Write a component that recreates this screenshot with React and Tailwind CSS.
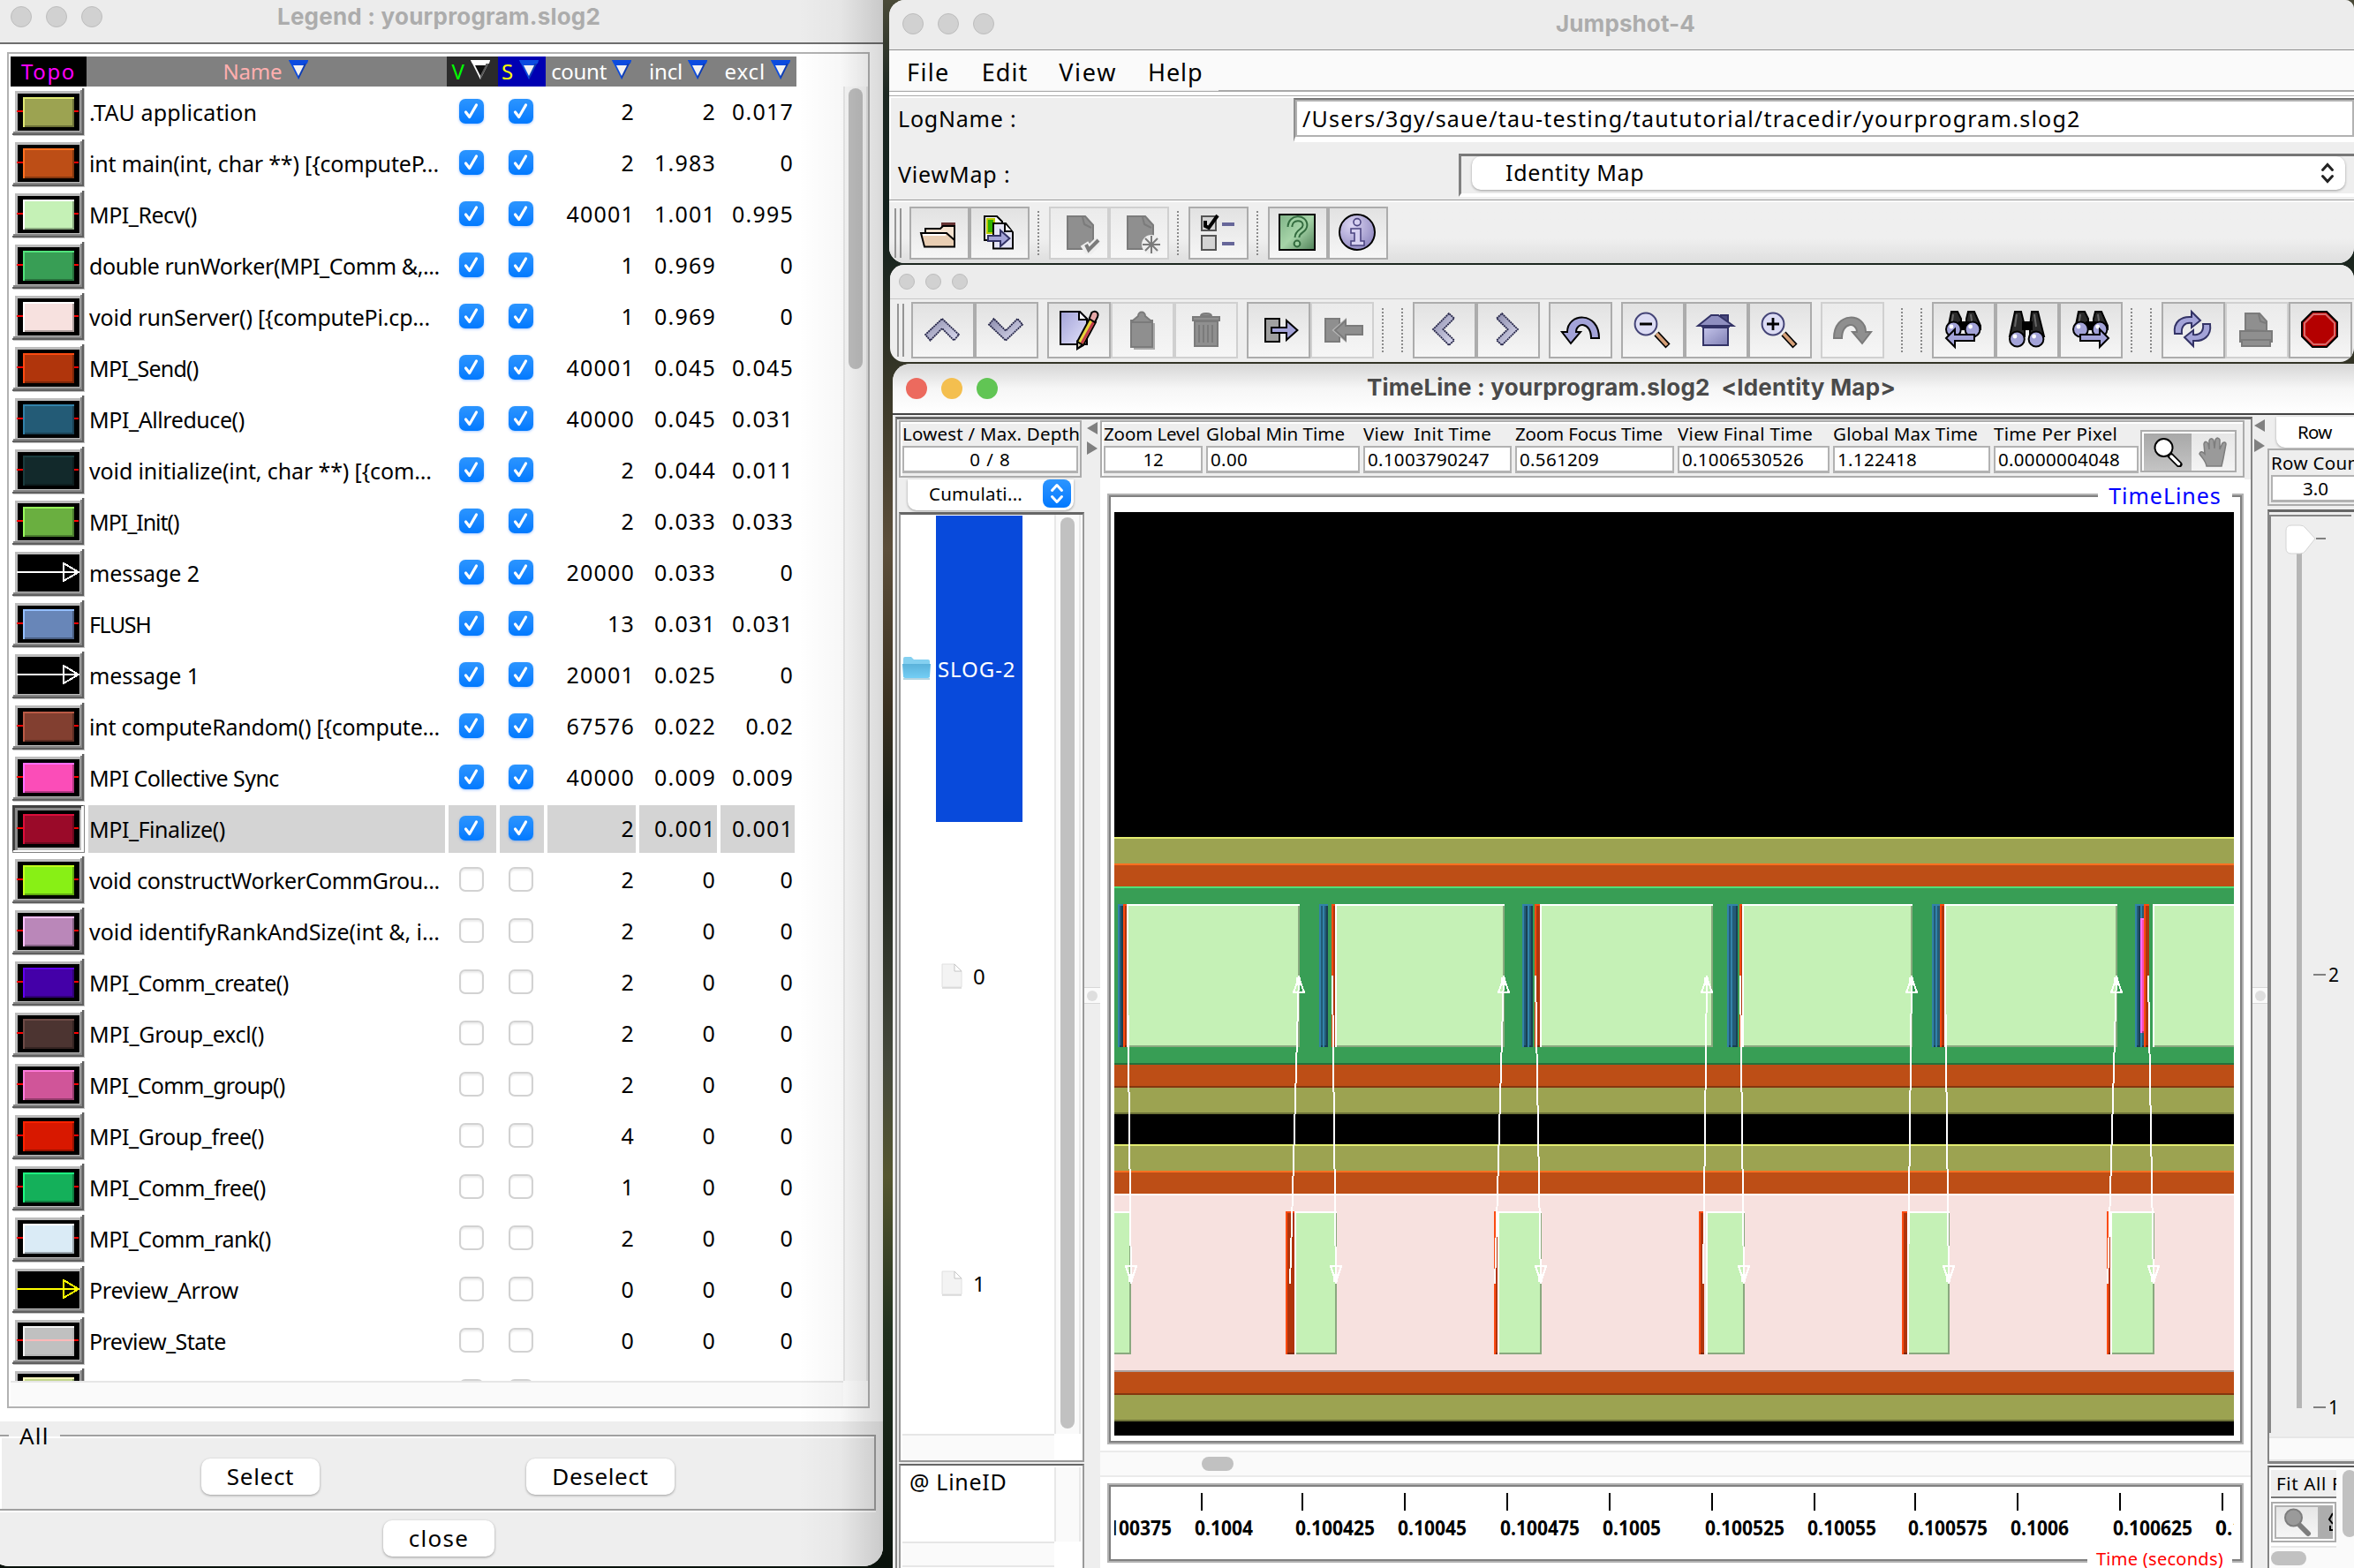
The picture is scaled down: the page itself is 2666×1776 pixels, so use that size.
import React, { useLayoutEffect, useRef, useState } from 'react';

/* Text whose letter spacing is computed so that it fills the width `w`. */
function Fit({ w, children, className = '' }) {
  const ref = useRef(null);
  const [spacing, setSpacing] = useState(0);
  useLayoutEffect(() => {
    const natural = ref.current.getBoundingClientRect().width;
    setSpacing((w - natural) / Math.max(1, String(children).length - 0.5));
  }, [w, children]);
  return (
    <span ref={ref} className={`inline-block shrink-0 whitespace-pre leading-none ${className}`} style={{ letterSpacing: `${spacing}px` }}>
      {children}
    </span>
  );
}

/* ---------- Legend window ---------- */

const rows = [
  ['.TAU application', 190, '#9ca351', '#dfe973', '#6d7238', '2', '2', '0.017'],
  ['int main(int, char **) [{computeP...', 396, '#bd4e16', '#ff7020', '#84370f', '2', '1.983', '0'],
  ['MPI_Recv()', 122, '#c5f1b6', '#ffffff', '#8aa97f', '40001', '1.001', '0.995'],
  ['double runWorker(MPI_Comm &,...', 397, '#389e55', '#50e27a', '#276f3b', '1', '0.969', '0'],
  ['void runServer() [{computePi.cp...', 386, '#f7e1df', '#ffffff', '#ad9e9c', '1', '0.969', '0'],
  ['MPI_Send()', 124, '#b0350c', '#fb4b11', '#7b2508', '40001', '0.045', '0.045'],
  ['MPI_Allreduce()', 176, '#235b76', '#3282a9', '#194053', '40000', '0.045', '0.031'],
  ['void initialize(int, char **) [{com...', 388, '#12292b', '#1a3b3d', '#0d1d1e', '2', '0.044', '0.011'],
  ['MPI_Init()', 102, '#6aaf40', '#97fa5b', '#4a7b2d', '2', '0.033', '0.033'],
  ['message 2', 125, 'arrow', '#ffffff', '', '20000', '0.033', '0'],
  ['FLUSH', 70, '#6886b8', '#94bfff', '#495e81', '13', '0.031', '0.031'],
  ['message 1', 125, 'arrow', '#ffffff', '', '20001', '0.025', '0'],
  ['int computeRandom() [{compute...', 397, '#823f30', '#ba5a45', '#5b2c22', '67576', '0.022', '0.02'],
  ['MPI Collective Sync', 215, '#fb4db8', '#ff6eff', '#b03681', '40000', '0.009', '0.009'],
  ['MPI_Finalize()', 154, '#9a0a29', '#dc0e3b', '#6c071d', '2', '0.001', '0.001'],
  ['void constructWorkerCommGrou...', 397, '#88f015', '#c2ff1e', '#5fa80f', '2', '0', '0'],
  ['void identifyRankAndSize(int &, i...', 397, '#ba87b9', '#ffc1ff', '#825f82', '2', '0', '0'],
  ['MPI_Comm_create()', 226, '#4400a8', '#6100f0', '#300076', '2', '0', '0'],
  ['MPI_Group_excl()', 198, '#4c3431', '#6d4a46', '#352422', '2', '0', '0'],
  ['MPI_Comm_group()', 222, '#d05599', '#ff7adb', '#923b6b', '2', '0', '0'],
  ['MPI_Group_free()', 198, '#d81800', '#ff2200', '#971100', '4', '0', '0'],
  ['MPI_Comm_free()', 200, '#14b05a', '#1dfb81', '#0e7b3f', '1', '0', '0'],
  ['MPI_Comm_rank()', 206, '#daebf6', '#ffffff', '#99a5ac', '2', '0', '0'],
  ['Preview_Arrow', 169, 'arrow', '#ffff00', '', '0', '0', '0'],
  ['Preview_State', 155, '#c0c0c0', '#f4f4f4', '#b4b4b4', '0', '0', '0'],
  ['', 0, '#c3d68c', '#fff9c0', '#88a060', '', '', ''],
];

function Swatch({ fill, light, dark, sunken, preview }) {
  return (
    <svg width="82" height="54" viewBox="0 0 82 54" shapeRendering="crispEdges" className="shrink-0">
      {sunken ? (
        <>
          <rect width="82" height="54" fill="#808080" />
          <rect x="0" y="0" width="80" height="3" fill="#404040" />
          <rect x="0" y="0" width="3" height="52" fill="#404040" />
          <rect x="3" y="3" width="75" height="48" fill="#8a8a8a" />
          <path d="M76 5h2v46H6v-3h70z" fill="#bcbcbc" />
          <path d="M78 1h3v52H1v-2h77z" fill="#fff" />
        </>
      ) : (
        <>
          <rect x="3" y="3" width="76" height="48" fill="#bcbcbc" />
          <path d="M77 2h3v48H0v-0h77z" fill="#868686" />
          <path d="M1 49h78v3H1z" fill="#868686" />
          <path d="M79 0h2v53H0v-2h79z" fill="#5f5f5f" />
          <path d="M81 0h1v54H1v-1h80z" fill="#c4c4c4" />
        </>
      )}
      <rect x="6" y="6" width="70" height="42" fill="#000" />
      {fill === 'arrow' ? (
        <>
          <path d="M5 26h71" stroke={light} strokeWidth="2" />
          <path d="M58 16v20l17-10z" fill="none" stroke={light} strokeWidth="2" />
        </>
      ) : (
        <>
          <path d="M5 26h7M70 26h5" stroke="#f00" strokeWidth="2" />
          <rect x="12" y="10" width="58" height="34" fill={fill} />
          <path d="M12 42h56v-32h2v34h-58z" fill={dark} />
          <path d="M12 10h58v2h-56v32h-2z" fill={light} />
          {preview && <path d="M14 26h56" stroke="#ffb8b8" strokeWidth="2" />}
        </>
      )}
    </svg>
  );
}

function Check({ on }) {
  return on ? (
    <span className="flex size-7 items-center justify-center rounded-[7px] bg-linear-to-b from-[#2b95ff] to-[#0079ff] shadow-[0_1px_3px_rgba(0,100,255,0.35)]">
      <svg width="20" height="20" viewBox="0 0 20 20" fill="none" stroke="#fff" strokeWidth="3.2" strokeLinecap="round" strokeLinejoin="round">
        <path d="M3.5 11l4.2 5.5L15.5 3" />
      </svg>
    </span>
  ) : (
    <span className="size-7 rounded-[7px] border-2 border-[#d2d2d2] bg-white shadow-[inset_0_2px_2px_rgba(0,0,0,0.08)]" />
  );
}

function SortMark({ face = '#f2f2f2', left = '#0b4be0', right = '#0f3cae', top = '#0b4be0' }) {
  return (
    <svg width="22" height="22" viewBox="0 0 22 22" className="-mt-1 shrink-0">
      <path d="M0 0h22l-11 22z" fill={left} />
      <path d="M22 0l-11 22v-4l7-15z" fill={right} />
      <path d="M0 0h22l-1 4H2z" fill={top} />
      <path d="M5 6h12l-6 12z" fill={face} />
    </svg>
  );
}

const COLS = 'grid grid-cols-[86px_408px_58px_54px_104px_92px_88px]';

function Dots({ size, gap }) {
  return (
    <div className={`flex ${gap}`}>
      {[0, 1, 2].map((i) => (
        <span key={i} className={`${size} rounded-full border border-[#bdbdbd] bg-[#d1d1d1]`} />
      ))}
    </div>
  );
}

function PushButton({ w, children, className }) {
  return (
    <button className={`flex items-center justify-center rounded-[10px] bg-white pb-0.5 text-[26px] shadow-[0_1px_3px_rgba(0,0,0,0.35)] ${className}`}>
      <Fit w={w}>{children}</Fit>
    </button>
  );
}

function LegendWindow() {
  return (
    <section className="absolute -left-3 top-[-20px] flex h-[1794px] w-[1012px] flex-col overflow-hidden rounded-[22px] bg-white pl-3 pt-5">
      <header className="flex h-12 shrink-0 items-center bg-[#ececec] pb-2.5 pl-3">
        <Dots size="size-6" gap="gap-4" />
        <Fit w={366} className="ml-[198px] font-['Inter'] text-[26px] font-bold text-[#acacac]">Legend : yourprogram.slog2</Fit>
      </header>
      <div className="h-0.5 shrink-0 bg-[#6e6e6e]" />
      <div className="ml-2 mt-[9px] flex h-[1536px] w-[977px] shrink-0 flex-col border-2 border-[#b2b2b2] pl-0.5 pt-[3px]">
        <div className={`h-[34px] shrink-0 text-[24px] text-white ${COLS}`}>
          <div className="flex items-center justify-center bg-black text-[#ff00ff]"><Fit w={61}>Topo</Fit></div>
          <div className="flex items-center justify-center gap-2 bg-[#808080] pr-0.5 text-[#ffafaf]"><Fit w={67}>Name</Fit><SortMark /></div>
          <div className="flex items-center justify-center gap-1 bg-[#2b2b2b] pr-1 text-[#00ff00]"><Fit w={17}>V</Fit><SortMark face="#101010" left="#fff" right="#555" top="#fff" /></div>
          <div className="flex items-center justify-center gap-1.5 bg-[#0000b2] pr-1 text-[#ffff00]"><Fit w={14}>S</Fit><SortMark /></div>
          <div className="flex items-center justify-end gap-1.5 bg-[#808080] pr-[7px]"><Fit w={63}>count</Fit><SortMark /></div>
          <div className="flex items-center justify-end gap-1.5 bg-[#808080] pr-[13px]"><Fit w={38}>incl</Fit><SortMark /></div>
          <div className="flex items-center justify-end gap-1.5 bg-[#808080] pr-[7px]"><Fit w={46}>excl</Fit><SortMark /></div>
        </div>
        <div className="flex h-[1466px] shrink-0">
          <div className="w-[943px] overflow-hidden">
            {rows.map(([name, w, fill, light, dark, count, incl, excl], i) => {
              const on = i < 15;
              const sel = i === 14 ? 'bg-[#d4d4d4]' : '';
              return (
                <div key={i} className={`h-[58px] text-[25px] ${COLS}`}>
                  <div className="flex items-center pl-0.5"><Swatch fill={fill} light={light} dark={dark} sunken={i === 14} preview={i === 24} /></div>
                  <div className={`m-0.5 flex items-center pl-px ${sel}`}>{name && <Fit w={w}>{name}</Fit>}</div>
                  <div className={`m-0.5 flex items-center justify-center pb-0.5 pr-0.5 ${sel}`}><Check on={on} /></div>
                  <div className={`m-0.5 flex items-center justify-center pb-0.5 pr-0.5 ${sel}`}><Check on={on} /></div>
                  <div className={`m-0.5 flex items-center justify-end pr-px tracking-[1.2px] ${sel}`}>{count}</div>
                  <div className={`m-0.5 flex items-center justify-end pr-px tracking-[1.2px] ${sel}`}>{incl}</div>
                  <div className={`m-0.5 flex items-center justify-end pr-px tracking-[1.2px] ${sel}`}>{excl}</div>
                </div>
              );
            })}
          </div>
          <div className="flex w-[28px] justify-center border-x-2 border-[#e8e8e8] bg-[#fafafa] pt-0.5">
            <div className="h-[318px] w-4 rounded-full bg-[#c1c1c1]" />
          </div>
        </div>
        <div className="h-[30px] w-[943px] border-t-2 border-[#e6e6e6] bg-[#fafafa]" />
      </div>
      <div className="mt-[15px] flex flex-1 flex-col bg-[#eee]">
        <fieldset className="-ml-0.5 mr-2 mt-0.5 h-[99px] border-2 border-[#a0a0a0] shadow-[inset_2px_2px_0_#fff,0_2px_0_#fff]">
          <legend className="ml-2.5 px-3 text-[26px] leading-7"><Fit w={33}>All</Fit></legend>
          <div className="mt-3 flex">
            <PushButton w={76} className="ml-[228px] h-[41px] w-[134px]">Select</PushButton>
            <PushButton w={109} className="ml-[234px] h-[41px] w-[168px]">Deselect</PushButton>
          </div>
        </fieldset>
        <PushButton w={68} className="ml-[434px] mt-[11px] h-[41px] w-[126px]">close</PushButton>
      </div>
      <div className="pointer-events-none absolute inset-y-0 right-0 w-24 bg-linear-to-r from-transparent via-black/3 to-black/15" />
    </section>
  );
}

/* ---------- Toolbar icons (24 x 24 grid) ---------- */

const K = { stroke: '#000', strokeWidth: 1 };
const LAV = '#a3a3d8';
const G = '#8f8f8f';
const G2 = '#7b7b7b';
const CHEVRON = { fill: 'url(#gChev)', stroke: '#26264a', strokeWidth: 0.9, strokeDasharray: '1 .35' };

const icons = {
  open: (
    <g {...K}>
      <path d="M13.5 8.5v-2h7v3" fill="#663333" stroke="#663333" />
      <path d="M4 11.5V9.500h8.500l1.500-1.500h6.500v9" fill="#f5e3d0" />
      <path d="M1.500 12h14.500l4.500 4v3.700h-17z" fill="#e9ceb3" />
      <path d="M2.500 13h13" stroke="#fff" />
    </g>
  ),
  importDoc: (
    <g {...K}>
      <path d="M3.500 2.500h7l3 3v10.500h-10z" fill="#fff" />
      <path d="M5 4h4v8H5z" fill="#2fb000" stroke="#b8c800" />
      <path d="M8.500 6.500h7l4 5v9.200h-11z" fill="#e4e4f6" />
      <path d="M15 7v4h4" fill="#fff" />
      <path d="M5.500 13.500h7v-3l5.200 4.500-5.200 4.500v-3h-7z" fill={LAV} stroke="#333366" />
    </g>
  ),
  docCheck: (
    <g stroke={G2} fill={G}>
      <path d="M5.500 2.500h10l4.500 5v13.500H5.500z" />
      <path d="M14 3l1 4 4 2" fill="none" />
      <path d="M15 18l2.500 4 6-6" stroke="#eee" strokeWidth="5" fill="none" />
      <path d="M16 18.500l1.500 3 5.500-5.500" strokeWidth="2" fill="none" />
    </g>
  ),
  docStar: (
    <g stroke={G2} fill={G}>
      <path d="M5.500 2.500h10l4.500 5v13.500H5.500z" />
      <path d="M14 3l1 4 4 2" fill="none" />
      <circle cx="19" cy="18.500" r="5" fill="#eee" stroke="#eee" />
      <path d="M19 13.500v10M14 18.500h10M15.500 15l7 7M22.500 15l-7 7" fill="none" />
    </g>
  ),
  checklist: (
    <g>
      <path d="M2.500 2.500h8v8h-8zM2.500 13.500h8v8h-8z" fill="#d4d4d4" stroke="#555" />
      <path d="M4.500 5v3l2 1 5-7" fill="none" stroke="#000" strokeWidth="2" />
      <path d="M14 7h7M14 18h7" stroke="#666699" strokeWidth="2" />
    </g>
  ),
  help: (
    <g>
      <path d="M1.500 1.500h20v20h-20z" fill="url(#gHelp)" stroke="#000" />
      <path d="M7.500 8.500c0-6 8.500-6 8.500-1 0 3.500-4.500 3-4.500 7" fill="none" stroke="#336b3f" strokeWidth="3.400" />
      <path d="M7.500 8.500c0-6 8.500-6 8.500-1 0 3.500-4.500 3-4.500 7" fill="none" stroke="#9fd0a2" strokeWidth="1.400" />
      <circle cx="11.500" cy="18" r="1.700" fill="#9fd0a2" stroke="#336b3f" />
    </g>
  ),
  info: (
    <g>
      <circle cx="11.500" cy="11.500" r="10" fill="url(#gInfo)" stroke="#000" />
      <circle cx="11.500" cy="5.800" r="2" fill="#d6d0f0" stroke="#4b4480" strokeWidth=".8" />
      <path d="M8 9.500h5.500v7h2v2.500H8v-2.500h2v-4.500H8z" fill="#d6d0f0" stroke="#4b4480" strokeWidth=".8" />
    </g>
  ),
  up: <path d="M11.500 5.500l9.500 9-2.800 3.300-6.700-6.800-6.700 6.800L2 14.500z" {...CHEVRON} />,
  down: <path d="M11.500 17.800l9.500-9-2.800-3.300-6.700 6.800-6.700-6.800L2 8.800z" {...CHEVRON} />,
  left: <path d="M14.500 2.500L5.500 11.500l9 9 3-2.800-6.300-6.200 6.300-6.200z" {...CHEVRON} />,
  right: <path d="M8.500 2.500l9 9-9 9-3-2.800 6.300-6.200-6.300-6.200z" {...CHEVRON} />,
  edit: (
    <g {...K}>
      <path d="M1.500 1.500h11l4 4v14.500h-15z" fill="url(#gDoc)" />
      <path d="M12 2v4h4" fill="#fff" />
      <path d="M11 22.500v-4L18 5.500l3.500 2-7 13z" fill="#e5d63c" />
      <path d="M13.500 19.500l7-12.500" stroke="#c03a4a" strokeWidth="1.500" />
      <path d="M17.800 5.500l1.400-3.500c2-1.500 4.300 0 3.300 2.500L21 7.500z" fill="#e6a8a8" />
      <path d="M11 22.500v-4l3 1.800z" fill="#ddd3b8" />
    </g>
  ),
  clipboard: (
    <g fill={G} stroke={G2}>
      <path d="M5.500 6.500h1l3-2.500c0-3 4-3 4 0l3 2.500h1v15h-12z" />
      <path d="M6 7.500h11" fill="none" />
      <path d="M18.500 8v14.500H7" fill="none" stroke="#aaa" />
    </g>
  ),
  trash: (
    <g fill={G} stroke={G2}>
      <path d="M4.500 4.500h15v2h-15zM9 4c0-2 6-2 6 0zM5.500 7h13v14h-13z" />
      <path d="M8 9v10M10.500 9v10M13 9v10M15.500 9v10" />
    </g>
  ),
  exit: (
    <g {...K}>
      <path d="M4.500 5.500h8v13h-8z" fill="#a0a0a0" />
      <path d="M8 10.500h8.500v-4l6.200 5.500-6.200 5.500v-4H8z" fill={LAV} />
    </g>
  ),
  enter: (
    <g fill={G} stroke={G2}>
      <path d="M2.500 5.500h8v13h-8z" />
      <path d="M23.500 9.500H14v-3.500L7 12l7 6v-3.500h9.500z" stroke="#b5b5b5" />
      <path d="M23.500 9.500H14v-3L8 12l6 5.500v-3h9.500z" />
    </g>
  ),
  undo: <path d="M1.500 13h3c0-11 18-12 18 3.500h-4.500c0-9.500-8.500-9-8.500-3.500h2.500L6.500 19.500z" fill={LAV} {...K} />,
  redo: <path d="M22.500 13h-3c0-11-18-12-18 3.500H6c0-9.500 8.500-9 8.500-3.500H12l5.500 6.500z" fill={G} stroke={G2} />,
  zoomOut: (
    <g {...K}>
      <path d="M14 14l6.500 7" stroke="#000" strokeWidth="3.500" />
      <path d="M14 14l6 6.500" stroke="#d6a078" strokeWidth="2" />
      <circle cx="8" cy="8.500" r="6.200" fill="#dcdcf4" stroke="#444477" />
      <path d="M4.500 8.500h7" strokeWidth="1.400" />
    </g>
  ),
  zoomIn: (
    <g {...K}>
      <path d="M14 14l6.500 7" stroke="#000" strokeWidth="3.500" />
      <path d="M14 14l6 6.500" stroke="#d6a078" strokeWidth="2" />
      <circle cx="8" cy="8.500" r="6.200" fill="#dcdcf4" stroke="#444477" />
      <path d="M4.500 8.500h7M8 5v7" strokeWidth="1.400" />
    </g>
  ),
  home: (
    <g stroke="#333366">
      <path d="M14.500 3.500h4v5h-4z" fill="#4a4a80" />
      <path d="M1.500 9.500L9 3.500h4l8.500 6z" fill="#8f8fc0" />
      <path d="M4.500 10.500h14v10h-14z" fill="url(#gHome)" />
      <path d="M3.500 10h16" />
    </g>
  ),
  find: <Binoculars />,
  findPrev: (
    <g>
      <Binoculars lift />
      <path d="M2 16.500l5-5v3h11v3.500H7v3.500z" fill={LAV} {...K} />
    </g>
  ),
  findNext: (
    <g>
      <Binoculars lift />
      <path d="M22 16.500l-5-5v3H6v3.500h11v3.500z" fill={LAV} {...K} />
    </g>
  ),
  refresh: (
    <g fill={LAV} stroke="#333366">
      <path d="M1.500 14c-1-7 4-10 9.500-9.500V1.500l5 5-5 4V8c-4-.5-6 2-5.500 6z" />
      <path d="M21.500 8.500c1 7-4 10-9.500 9.500v3l-5-5 5-4v2.500c4 .5 6-2 5.500-6z" />
    </g>
  ),
  print: (
    <g fill={G} stroke={G2}>
      <path d="M5.500 12V2.500h8l4 4.500v5.500z" />
      <path d="M13 3l1 4 3 1" fill="none" />
      <path d="M2.500 12.500h18v6h-1v2.500h-16v-2.500h-1z" />
      <path d="M3 17.500h17" />
    </g>
  ),
  stop: (
    <g>
      <path d="M7.500 1.500h8l6 6v8l-6 6h-8l-6-6v-8z" fill="#b40000" stroke="#000" />
      <path d="M8 3h7l5 5v7l-5 5H8l-5-5V8z" fill="none" stroke="#d86a6a" />
    </g>
  ),
};

function Binoculars({ lift }) {
  const y = lift ? 11.500 : 17;
  return (
    <g>
      <path d={lift ? 'M5 1.500h3.500l2 4v6H3zM14.500 1.500H18l3.500 8v2h-8v-6z' : 'M5 1.500h3.500l2 8v6H2zM14.500 1.500H18l3.500 14h-8v-6z'} fill="#2a2a2a" stroke="#000" />
      <path d="M9 7h6v5H9z" fill="#000" />
      <path d="M6 3l-1 7M16 3l1 7" stroke="#666" />
      <circle cx="6.200" cy={y} r="4.200" fill="#a3a3d8" stroke="#000" />
      <circle cx="17" cy={y} r="4.200" fill="#a3a3d8" stroke="#000" />
      <circle cx="5" cy={y - 1.500} r="1.200" fill="#fff" />
      <circle cx="15.800" cy={y - 1.500} r="1.200" fill="#fff" />
    </g>
  );
}

function Tool({ icon, disabled, wide }) {
  return (
    <span
      className={`flex shrink-0 items-center justify-center border-2 bg-linear-to-b from-[#e2e2e2] to-[#f6f6f6] ${wide ? 'h-16 w-[72px]' : 'h-[60px] w-[68px]'} ${disabled ? 'border-[#d0d0d0] from-[#ebebeb]' : 'border-[#acacac]'}`}
    >
      <svg width="48" height="48" viewBox="0 0 24 24" fill="none">{icons[icon]}</svg>
    </span>
  );
}

const Sep = ({ className = '' }) => <span className={`h-[50px] w-0 shrink-0 border-l-2 border-dotted border-[#8a8a8a] ${className}`} />;
const Grip = ({ className = '' }) => <span className={`w-2 shrink-0 border-x-2 border-[#959595] ${className}`} />;

/* ---------- Main window ---------- */

function JumpshotWindow() {
  return (
    <section className="absolute left-[1007px] top-0 flex h-[298px] w-[1659px] flex-col overflow-hidden rounded-b-[18px] rounded-tl-[18px] rounded-tr-[10px] bg-[#eee]">
      <header className="flex h-14 shrink-0 items-center bg-[#ececec] pb-0.5 pl-[15px]">
        <Dots size="size-6" gap="gap-4" />
        <Fit w={158} className="ml-[636px] font-['Inter'] text-[26px] font-bold text-[#acacac]">Jumpshot-4</Fit>
      </header>
      <nav className="flex h-[46px] shrink-0 items-center border-t border-[#8e8e8e] bg-[#fafafa] pl-[20px] pt-1 text-[27px]">
        <Fit w={48}>File</Fit>
        <Fit w={52} className="ml-[36px]">Edit</Fit>
        <Fit w={65} className="ml-[35px]">View</Fit>
        <Fit w={62} className="ml-[35px]">Help</Fit>
      </nav>
      <div className="ml-[373px] h-px shrink-0 bg-[#a8a8a8]" />
      <div className="h-1.5 shrink-0 border-b border-t border-[#aaa] bg-white" />
      <div className="flex h-[117px] shrink-0 flex-col border-l-2 border-t-2 border-white text-[25px]">
        <div className="flex h-[50px] items-start">
          <div className="flex h-[46px] w-[456px] items-center pl-2"><Fit w={134}>LogName :</Fit></div>
          <div className="h-[50px] flex-1 border-b-[6px] border-l-2 border-t-2 border-b-white border-l-[#909090] border-t-[#787878]">
            <div className="flex h-[42px] items-center border-2 border-[#b2b2b2] bg-white pl-1.5"><Fit w={881}>/Users/3gy/saue/tau-testing/taututorial/tracedir/yourprogram.slog2</Fit></div>
          </div>
        </div>
        <div className="flex h-[65px] items-center">
          <div className="w-[643px] pl-2 pt-2"><Fit w={127}>ViewMap :</Fit></div>
          <div className="mt-[9px] flex h-[49px] flex-1 items-start border-b-4 border-l-[3px] border-t-[3px] border-b-white border-l-[#808080] border-t-[#787878] pl-3">
            <div className="flex h-[38px] w-[989px] items-center justify-between rounded-[10px] bg-white pl-[38px] pr-3 shadow-[0_1px_3px_rgba(0,0,0,0.35)]">
              <Fit w={157}>Identity Map</Fit>
              <svg width="16" height="26" viewBox="0 0 16 26" fill="none" stroke="#222" strokeWidth="3" strokeLinecap="round"><path d="M2.500 9.500l5.500-6 5.500 6M2.500 16.500l5.500 6 5.500-6" /></svg>
            </div>
          </div>
        </div>
      </div>
      <div className="h-[3px] shrink-0 border-b-2 border-t border-b-white border-t-[#999]" />
      <div className="flex flex-1 items-center bg-linear-to-b from-[#efefef] from-60% to-[#dedede] pl-1.5 pt-px">
        <Grip className="h-14" />
        <div className="ml-[9px] flex"><Tool icon="open" /><Tool icon="importDoc" /></div>
        <Sep className="ml-[9px]" />
        <div className="ml-[11px] flex"><Tool icon="docCheck" disabled /><Tool icon="docStar" disabled /></div>
        <Sep className="ml-[9px]" />
        <div className="ml-[11px] flex"><Tool icon="checklist" /></div>
        <Sep className="ml-[9px]" />
        <div className="ml-[11px] flex"><Tool icon="help" /><Tool icon="info" /></div>
      </div>
    </section>
  );
}

function ToolbarWindow() {
  return (
    <section className="absolute left-[1008px] top-[300px] flex h-[110px] w-[1658px] flex-col overflow-hidden rounded-[16px] bg-[#eee]">
      <header className="flex h-[39px] shrink-0 items-center border-b border-[#c8c8c8] bg-[#ececec] pl-2.5">
        <Dots size="size-[18px]" gap="gap-3" />
      </header>
      <div className="flex h-[70px] items-center pl-2">
        <Grip className="h-[60px]" />
        <div className="ml-2 flex"><Tool wide icon="up" /><Tool wide icon="down" /></div>
        <div className="ml-2.5 flex"><Tool wide icon="edit" /><Tool wide icon="clipboard" disabled /><Tool wide icon="trash" disabled /></div>
        <div className="ml-2.5 flex"><Tool wide icon="exit" /><Tool wide icon="enter" disabled /></div>
        <Sep className="ml-[9px]" /><Sep className="ml-5" />
        <div className="ml-[11px] flex"><Tool wide icon="left" /><Tool wide icon="right" /></div>
        <div className="ml-2.5 flex"><Tool wide icon="undo" /></div>
        <div className="ml-2.5 flex"><Tool wide icon="zoomOut" /><Tool wide icon="home" /><Tool wide icon="zoomIn" /></div>
        <div className="ml-2.5 flex"><Tool wide icon="redo" disabled /></div>
        <Sep className="ml-[19px]" /><Sep className="ml-5" />
        <div className="ml-[11px] flex"><Tool wide icon="findPrev" /><Tool wide icon="find" /><Tool wide icon="findNext" /></div>
        <Sep className="ml-[9px]" /><Sep className="ml-5" />
        <div className="ml-[11px] flex"><Tool wide icon="refresh" /><Tool wide icon="print" disabled /><Tool wide icon="stop" /></div>
      </div>
    </section>
  );
}

/* ---------- Timeline window ---------- */

const bands = [
  [948, 2, '#e3ec70'], [950, 28, '#9ca351'], [978, 2, '#ff7020'], [980, 24, '#bd4e16'],
  [1004, 2, '#50e27a'], [1006, 198, '#389e55'], [1204, 2, '#276f3b'], [1206, 24, '#bd4e16'],
  [1230, 2, '#84370f'], [1232, 28, '#9ca351'], [1260, 2, '#6d7238'],
  [1296, 2, '#e3ec70'], [1298, 28, '#9ca351'], [1326, 2, '#ff7020'], [1328, 24, '#bd4e16'],
  [1352, 2, '#fff'], [1354, 198, '#f7e1df'], [1552, 2, '#ad9e9c'], [1554, 24, '#bd4e16'],
  [1578, 2, '#84370f'], [1580, 28, '#9ca351'], [1608, 2, '#6d7238'],
];
const C = {
  recv: ['#c5f1b6', '#fff', '#8aa97f'],
  send: ['#b0350c', '#fb4b11', '#7b2508'],
  red: ['#235b76', '#3282a9', '#194053'],
  sync: ['#fb4db8', '#ff6eff', '#b03681'],
};
const states = [
  ['red', 1266, 1272], ['send', 1272, 1276], ['recv', 1276, 1472],
  ['red', 1494, 1498], ['red', 1498, 1504], ['send', 1508, 1512], ['recv', 1512, 1704],
  ['red', 1724, 1730], ['red', 1730, 1736], ['send', 1738, 1744], ['recv', 1744, 1940],
  ['red', 1956, 1960], ['red', 1960, 1968], ['send', 1970, 1973], ['recv', 1973, 2166],
  ['red', 2188, 2192], ['red', 2192, 2197], ['send', 2197, 2202], ['recv', 2202, 2398],
  ['red', 2418, 2424], ['red', 2424, 2428], ['sync', 2424, 2428, 1040, 130], ['send', 2428, 2434], ['recv', 2438, 2534],
].map(([k, a, b, y = 1024, h = 162]) => [k, a, b, y, h]).concat([
  ['recv', 1256, 1281], ['send', 1456, 1466], ['recv', 1466, 1514], ['send', 1692, 1696], ['recv', 1696, 1746],
  ['send', 1924, 1930], ['recv', 1932, 1976], ['send', 2154, 2160], ['recv', 2160, 2208], ['send', 2386, 2390], ['recv', 2390, 2440],
].map(([k, a, b]) => [k, a, b, 1372, 162]));
const ups = [[1461, 1471], [1693, 1703], [1929, 1933], [2161, 2165], [2387, 2397]];
const downs = [[1277, 1281], [1509, 1513], [1739, 1745], [1971, 1975], [2203, 2207], [2433, 2439]];

function Chart() {
  return (
    <svg width="1268" height="1046" viewBox="1262 580 1268 1046" shapeRendering="crispEdges" className="block shrink-0 bg-black">
      {bands.map(([y, h, f]) => <rect key={y} x="1262" y={y} width="1268" height={h} fill={f} />)}
      {states.map(([k, a, b, y, h], i) => (
        <g key={i}>
          <rect x={a} y={y} width={b - a} height={h} fill={C[k][0]} />
          {b - a > 5 && <rect x={b - 2} y={y} width="2" height={h} fill={k === 'send' ? C[k][0] : C[k][2]} />}
          <rect x={a} y={y + h - 2} width={b - a} height="2" fill={C[k][2]} />
          <rect x={a} y={y} width={b - a} height="2" fill={C[k][1]} />
          <rect x={a} y={y} width="2" height={h} fill={C[k][1]} />
        </g>
      ))}
      <g stroke="#fff" strokeWidth="2" fill="none">
        {ups.map(([a, b]) => <path key={a} d={`M${a} 1454L${b} 1105M${b} 1107l-6 17h12zM${b - 2} 1107v9M${b + 1} 1107v9`} />)}
        {downs.map(([a, b]) => <path key={a} d={`M${a} 1105L${b} 1454M${b} 1452l-6-18h12zM${b - 2} 1452v-9M${b + 1} 1452v-9`} />)}
      </g>
    </svg>
  );
}

const ticks = [
  [1245, '0.100375', 90], [1361, '0.1004', 66], [1475, '0.100425', 90], [1591, '0.10045', 78], [1707, '0.100475', 90], [1823, '0.1005', 66],
  [1939, '0.100525', 90], [2055, '0.10055', 78], [2169, '0.100575', 90], [2285, '0.1006', 66], [2401, '0.100625', 90], [2517, '0.10065', 84],
];

function Ruler() {
  return (
    <svg width="1268" height="72" viewBox="1262 1684 1268 72" className="block">
      {ticks.map(([x, t, w]) => (
        <g key={x}>
          <rect x={x - 1} y="1690" width="2" height="20" fill="#000" shapeRendering="crispEdges" />
          <text x={x - 8} y="1738" textLength={w} lengthAdjust="spacingAndGlyphs" fontSize="23" fontWeight="700" fontFamily="Noto Sans, sans-serif">{t}</text>
        </g>
      ))}
    </svg>
  );
}

const fields = [
  ['Zoom Level', 109, '12', 23, 'w-[112px] justify-center'],
  ['Global Min Time', 157, '0.00', 42, 'w-[174px] pl-[3px]'],
  ['View  Init Time', 145, '0.1003790247', 138, 'w-[168px] pl-[3px]'],
  ['Zoom Focus Time', 167, '0.561209', 90, 'w-[180px] pl-[3px]'],
  ['View Final Time', 153, '0.1006530526', 138, 'w-[172px] pl-[3px]'],
  ['Global Max Time', 164, '1.122418', 90, 'w-[178px] pl-[3px]'],
  ['Time Per Pixel', 140, '0.0000004048', 138, 'w-[164px] pl-[3px]'],
];

function Field({ label, lw, value, vw, box }) {
  return (
    <div className="flex flex-col text-[20.5px]">
      <div className="flex h-[26px] w-0 items-center overflow-visible pb-0.5"><Fit w={lw}>{label}</Fit></div>
      <div className={`flex h-[31px] items-center border-2 border-b-[3px] border-[#b2b2b2] bg-white ${box}`}><Fit w={vw}>{value}</Fit></div>
    </div>
  );
}

function SplitArrows() {
  return (
    <svg width="13" height="38" viewBox="0 0 13 38" fill="#808080" className="shrink-0"><path d="M12 0v14L0 7zM0 22v15l12-7z" /></svg>
  );
}

function Knob() {
  return (
    <div className="flex h-[19px] w-full shrink-0 items-center justify-center border-y border-[#d8d8d8] bg-[#fafafa]"><span className="size-3 rounded-full bg-[#dedede]" /></div>
  );
}

const Page = ({ className }) => (
  <svg width="24" height="29" viewBox="0 0 24 29" className={className}>
    <path d="M1 1h14l8 8v18H1z" fill="#f3f3f3" stroke="#e0e0e0" />
    <path d="M15 1v8h8z" fill="#fff" stroke="#c4c4c4" />
    <path d="M1 28h22" stroke="#c4c4c4" />
  </svg>
);

const Hand = () => (
  <svg width="34" height="34" viewBox="0 0 34 34" fill="#9a9a9a" stroke="#7d7d7d" strokeWidth="1.500">
    <path d="M9 33c-1-6-4-8-8-14 1-4 4-2 6 0L6 8c1-4 4-3 5 0l1 6V4c1-3 4-3 5 0l1 9 1-10c2-3 4-2 5 0v11l3-7c2-2 4-1 4 1l-3 16-2 9z" />
  </svg>
);

function TimelineWindow() {
  return (
    <section className="absolute left-[1011px] top-[412px] flex h-[1364px] w-[1655px] flex-col overflow-hidden rounded-tl-[20px] bg-[#eee]">
      <header className="flex h-14 shrink-0 items-center bg-linear-to-b from-[#d6d6d6] via-[#f6f6f6] via-50% to-white pb-px pl-[15px]">
        <span className="size-6 rounded-full bg-[#ec6a5e]" />
        <span className="ml-4 size-6 rounded-full bg-[#f4bf4f]" />
        <span className="ml-4 size-6 rounded-full bg-[#61c554]" />
        <Fit w={599} className="-mt-0.5 ml-[418px] font-['Inter'] text-[26px] font-bold text-[#4a4a4a]">{'TimeLine : yourprogram.slog2  <Identity Map>'}</Fit>
      </header>
      <div className="h-0.5 shrink-0 bg-[#444]" />
      <div className="flex flex-1">
        <div className="ml-[3px] mt-0.5 flex w-[1537px] shrink-0 border-x-2 border-t-[3px] border-x-[#858585] border-t-[#666]">
          {/* process tree */}
          <div className="ml-0.5 flex w-[210px] shrink-0 flex-col pt-px">
            <div className="h-[65px] w-[207px] border-2 border-[#acacac] p-0.5 pt-px shadow-[inset_2px_2px_0_#fff]">
              <Field label="Lowest / Max. Depth" lw={201} value="0 / 8" vw={46} box="w-[199px] justify-center" />
            </div>
            <div className="ml-2.5 mt-0.5 flex h-[35px] w-[188px] items-start justify-between rounded-b-[10px] bg-white pl-6 pr-[3px] text-[20.5px] shadow-[0_1px_3px_rgba(0,0,0,0.35)]">
              <Fit w={106} className="mt-1.5">Cumulati...</Fit>
              <span className="flex h-8 w-8 items-center justify-center rounded-[8px] bg-linear-to-b from-[#2b95ff] to-[#0079ff]">
                <svg width="18" height="26" viewBox="0 0 18 26" fill="none" stroke="#fff" strokeWidth="3" strokeLinecap="round" strokeLinejoin="round"><path d="M3.500 9.500L9 3.500l5.500 6M3.500 16.500L9 22.500l5.500-6" /></svg>
              </span>
            </div>
            <div className="mt-0.5 flex h-[1076px] shrink-0 flex-col border-2 border-t-[3px] border-[#999] border-t-[#666] bg-white">
              <div className="flex h-[1041px] shrink-0">
                <div className="flex w-[174px] flex-col pt-px text-[24px]">
                  <div className="flex h-[348px] items-center">
                    <svg width="32" height="28" viewBox="0 0 32 28" className="ml-0.5">
                      <path d="M1 3q0-2 2-2h7l3 3h16q2 0 2 2v18H1z" fill="#84d0f0" />
                      <path d="M0 9h32l-1 14q0 2-2 2H3q-2 0-2-2z" fill="url(#gFold)" />
                      <path d="M1 26h30" stroke="#6ba9c4" />
                    </svg>
                    <div className="ml-1.5 flex h-full w-[98px] items-center bg-[#084adb] pl-0.5 pt-0.5 text-white"><Fit w={88}>SLOG-2</Fit></div>
                  </div>
                  <div className="flex h-[348px] items-center pl-[46px] pt-1"><Page /><span className="ml-3">0</span></div>
                  <div className="flex h-[348px] items-center pl-[46px] pt-1.5"><Page /><span className="ml-3">1</span></div>
                </div>
                <div className="mr-0.5 flex flex-1 justify-center border-x-2 border-[#e8e8e8] bg-[#fafafa] pt-[3px]"><div className="h-[1032px] w-4 rounded-full bg-[#c1c1c1]" /></div>
              </div>
              <div className="ml-0.5 w-[172px] flex-1 border-t-2 border-[#e6e6e6] bg-[#fafafa]" />
            </div>
            <div className="mt-0.5 flex flex-1 flex-col border-x-2 border-t-2 border-[#999] border-t-[#666] bg-white">
              <div className="flex h-[86px] shrink-0">
                <div className="flex w-[174px] items-start pl-[10px] pt-1.5 text-[25px]"><Fit w={110}>@ LineID</Fit></div>
                <div className="mr-0.5 mt-0.5 flex-1 border-x-2 border-[#e8e8e8] bg-[#fafafa]" />
              </div>
              <div className="ml-0.5 h-[29px] w-[172px] border-y-2 border-[#e6e6e6] bg-[#fafafa]" />
            </div>
          </div>
          <div className="flex w-[18px] shrink-0 flex-col items-center pt-[3px]">
            <SplitArrows />
            <div className="h-[602px]" />
            <Knob />
          </div>
          {/* canvas column */}
          <div className="flex flex-1 flex-col">
            <div className="mt-px flex h-[65px] w-[1296px] gap-1 border-2 border-[#acacac] pl-0.5 pt-px shadow-[inset_2px_2px_0_#fff,0_2px_0_#fff]">
              {fields.map(([label, lw, value, vw, box]) => <Field key={label} label={label} lw={lw} value={value} vw={vw} box={box} />)}
              <div className="-ml-0.5 mt-2 flex h-[48px] w-[109px] border-2 border-[#acacac] bg-white pl-0.5 pt-0.5">
                <span className="flex w-[54px] items-center justify-center bg-linear-to-b from-[#a8a8a8] to-[#c4c4c4]">
                  <svg width="34" height="34" viewBox="0 0 34 34"><path d="M20 21l10 10" stroke="#000" strokeWidth="7" strokeLinecap="round" /><path d="M21 22l8.500 8.500" stroke="#fff" strokeWidth="3.500" strokeLinecap="round" /><circle cx="12.500" cy="12" r="10" fill="#fff" stroke="#000" strokeWidth="2" /></svg>
                </span>
                <span className="flex flex-1 items-center justify-center bg-linear-to-b from-[#e6e6e6] to-[#f4f4f4]"><Hand /></span>
              </div>
            </div>
            <div className="mt-0.5 flex flex-1 flex-col bg-white">
              <div className="relative ml-2 mt-4 h-[1077px] w-[1287px] shrink-0 border-2 border-[#b2b2b2]">
                <div className="h-full border-2 border-[#808080] pl-1 pt-[17px]"><Chart /></div>
                <div className="absolute -top-4 right-[11px] flex h-8 w-[152px] items-center justify-center bg-white text-[25px] text-[#0000ff]"><Fit w={127}>TimeLines</Fit></div>
              </div>
              <div className="mt-[7px] flex h-[30px] shrink-0 items-center border-y-2 border-[#ebebeb] bg-[#fafafa]"><div className="ml-[115px] h-4 w-9 rounded-full bg-[#c1c1c1]" /></div>
              <div className="relative ml-2 mt-[7px] h-[90px] w-[1287px] shrink-0 border-2 border-[#b2b2b2]">
                <div className="h-full border-2 border-[#808080] pl-1 pt-px"><Ruler /></div>
                <div className="absolute -bottom-2 right-[11px] flex h-5 w-[164px] items-center justify-center bg-white text-[20px] text-[#ff0000]"><Fit w={144}>Time (seconds)</Fit></div>
              </div>
            </div>
          </div>
        </div>
        <div className="flex w-[17px] shrink-0 flex-col items-center pt-[5px]">
          <SplitArrows />
          <div className="h-[605px] shrink-0" />
          <Knob />
        </div>
        {/* row controls */}
        <div className="flex w-[98px] shrink-0 flex-col overflow-hidden">
          <div className="ml-[10px] mt-0.5 flex h-[35px] shrink-0 items-center rounded-bl-[10px] bg-white pl-6 text-[20.5px] shadow-[0_1px_3px_rgba(0,0,0,0.3)]"><Fit w={39}>Row</Fit></div>
          <div className="mt-px h-[65px] shrink-0 overflow-hidden whitespace-nowrap border-y-2 border-l-2 border-[#acacac] pl-0.5 pt-0.5 text-[20.5px]">
            <Field label="Row Count" lw={107} value="3.0" vw={29} box="w-[140px] pl-[34px]" />
          </div>
          <div className="mt-1 flex h-[1081px] shrink-0 flex-col border-y-[3px] border-l-2 border-[#858585] border-t-[#666]">
            <div className="mr-[3px] mt-[3px] flex h-[1040px] border-l-2 border-t-2 border-[#858585] bg-[#eee]">
              <svg width="90" height="1036" viewBox="2575 585 90 1036" className="shrink-0">
                <path d="M2607 620v975" stroke="#b5b5b5" strokeWidth="6" />
                <path d="M2626 610h11M2623 1104h14M2623 1594h14" stroke="#808080" strokeWidth="2" />
                <path d="M2592 601q0-6 6-6h10q4 0 6 3l11 12-11 14q-2 3-6 3h-10q-6 0-6-6z" fill="#fff" stroke="#d4d4d4" />
                <text x="2640" y="1112" fontSize="21" fontFamily="Noto Sans, sans-serif">2</text>
                <text x="2640" y="1602" fontSize="21" fontFamily="Noto Sans, sans-serif">1</text>
              </svg>
            </div>
            <div className="mt-1 h-[28px] border-y-2 border-[#e6e6e6] bg-[#fafafa]" />
          </div>
          <div className="mt-0.5 flex flex-1 overflow-hidden border-l-2 border-t-2 border-[#858585] border-t-[#555] bg-white">
            <div className="flex w-[76px] shrink-0 flex-col overflow-hidden pl-0.5 pt-[3px]">
              <div className="flex h-8 shrink-0 items-center overflow-hidden whitespace-nowrap border-b-2 border-[#777] bg-[#eee] pl-1.5 text-[20.5px]"><Fit w={116}>Fit All Rows</Fit></div>
              <div className="mt-1 flex h-[46px] shrink-0 border-2 border-[#acacac] p-0.5">
                <span className="flex w-[51px] shrink-0 items-center justify-center border-2 border-[#b2b2b2] bg-linear-to-b from-[#e6e6e6] to-[#f6f6f6]">
                  <svg width="34" height="34" viewBox="0 0 34 34"><path d="M20 21l9 9" stroke="#7d7d7d" strokeWidth="6" strokeLinecap="round" /><circle cx="12.500" cy="12" r="9.500" fill="#9a9a9a" stroke="#7d7d7d" strokeWidth="2" /></svg>
                </span>
                <span className="flex flex-1 items-center justify-end bg-[#adadad]"><svg width="6" height="26" viewBox="0 0 6 26"><path d="M6 3L2 10l4 5M3 17v5h3" fill="none" stroke="#000" strokeWidth="2" /></svg></span>
              </div>
              <div className="mt-1 flex flex-1 items-center border-t-2 border-[#e6e6e6] bg-[#fafafa]"><div className="h-4 w-10 rounded-full bg-[#c1c1c1]" /></div>
            </div>
            <div className="flex-1 overflow-hidden bg-[#fafafa] pl-[7px] pt-[3px]"><div className="h-[76px] w-4 rounded-full bg-[#c1c1c1]" /></div>
          </div>
        </div>
      </div>
    </section>
  );
}

export default function App() {
  return (
    <main className="relative h-[1776px] w-[2666px] overflow-hidden bg-[linear-gradient(180deg,#4a4a38_0%,#1c2822_6%,#11201c_14%,#3a3828_25%,#5c4e3a_35%,#3a3020_45%,#1a2018_52%,#45493c_68%,#55562f_75%,#20301e_85%,#0a120c_100%)] font-['Noto_Sans',sans-serif] text-black">
      <svg width="0" height="0" className="absolute">
        <defs>
          <linearGradient id="gHelp" x1="0" y1="0" x2="1" y2="1"><stop offset="0" stopColor="#7fb287" /><stop offset=".5" stopColor="#a6d4a8" /><stop offset="1" stopColor="#4f8058" /></linearGradient>
          <radialGradient id="gInfo" cx=".35" cy=".3" r=".8"><stop offset="0" stopColor="#dcd6f4" /><stop offset="1" stopColor="#8b83bd" /></radialGradient>
          <linearGradient id="gDoc" x1="0" y1="0" x2="1" y2="1"><stop offset="0" stopColor="#a3a3d8" /><stop offset="1" stopColor="#e2e2fa" /></linearGradient>
          <linearGradient id="gHome" x1="0" y1="0" x2="1" y2="1"><stop offset="0" stopColor="#c4c4ea" /><stop offset="1" stopColor="#8080b4" /></linearGradient>
          <linearGradient id="gChev" x1="0" y1="0" x2="1" y2="1"><stop offset="0" stopColor="#8c8cac" /><stop offset="1" stopColor="#dcdcf0" /></linearGradient>
          <linearGradient id="gFold" x1="0" y1="0" x2="0" y2="1"><stop offset="0" stopColor="#5bb2da" /><stop offset="1" stopColor="#74cef5" /></linearGradient>
        </defs>
      </svg>
      <LegendWindow />
      <JumpshotWindow />
      <ToolbarWindow />
      <TimelineWindow />
    </main>
  );
}
